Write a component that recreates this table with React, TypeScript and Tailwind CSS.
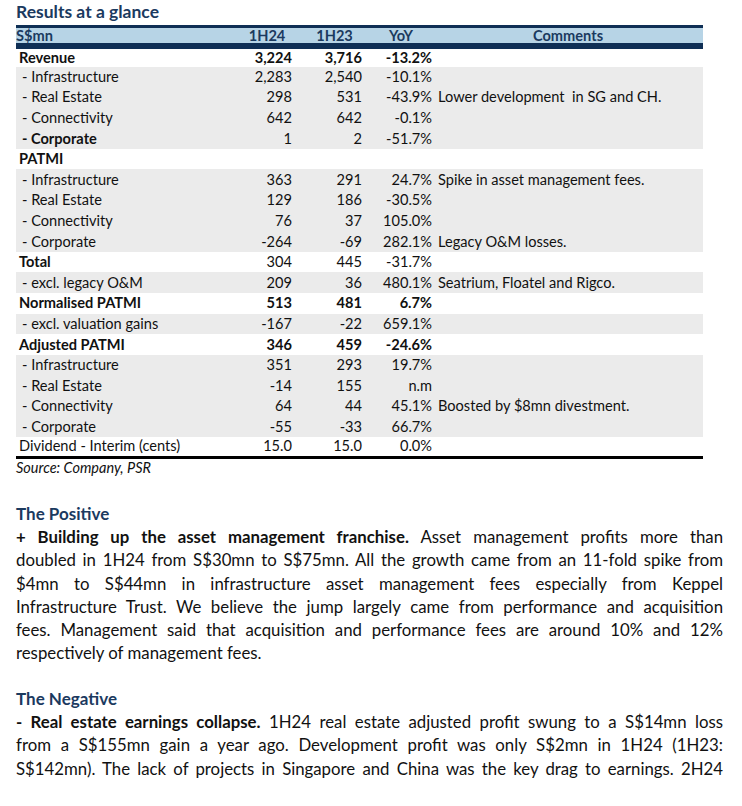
import React from "react";

type Row = {
  label: string;
  a: string;
  b: string;
  yoy: string;
  note?: string;
  sub?: boolean;
  gray?: boolean;
  boldLabel?: boolean;
  boldNums?: boolean;
  h?: string;
};

const rows: Row[] = [
  { label: "Revenue", a: "3,224", b: "3,716", yoy: "-13.2%", boldLabel: true, boldNums: true, h: "h-[17.5px]" },
  { label: "- Infrastructure", a: "2,283", b: "2,540", yoy: "-10.1%", sub: true, gray: true },
  { label: "- Real Estate", a: "298", b: "531", yoy: "-43.9%", note: "Lower development  in SG and CH.", sub: true, gray: true },
  { label: "- Connectivity", a: "642", b: "642", yoy: "-0.1%", sub: true, gray: true },
  { label: "- Corporate", a: "1", b: "2", yoy: "-51.7%", sub: true, gray: true, boldLabel: true },
  { label: "PATMI", a: "", b: "", yoy: "", boldLabel: true },
  { label: "- Infrastructure", a: "363", b: "291", yoy: "24.7%", note: "Spike in asset management fees.", sub: true, gray: true },
  { label: "- Real Estate", a: "129", b: "186", yoy: "-30.5%", sub: true, gray: true },
  { label: "- Connectivity", a: "76", b: "37", yoy: "105.0%", sub: true, gray: true },
  { label: "- Corporate", a: "-264", b: "-69", yoy: "282.1%", note: "Legacy O&M losses.", sub: true, gray: true },
  { label: "Total", a: "304", b: "445", yoy: "-31.7%", boldLabel: true },
  { label: "- excl. legacy O&M", a: "209", b: "36", yoy: "480.1%", note: "Seatrium, Floatel and Rigco.", sub: true, gray: true },
  { label: "Normalised PATMI", a: "513", b: "481", yoy: "6.7%", boldLabel: true, boldNums: true },
  { label: "- excl. valuation gains", a: "-167", b: "-22", yoy: "659.1%", sub: true, gray: true },
  { label: "Adjusted PATMI", a: "346", b: "459", yoy: "-24.6%", boldLabel: true, boldNums: true },
  { label: "- Infrastructure", a: "351", b: "293", yoy: "19.7%", sub: true, gray: true },
  { label: "- Real Estate", a: "-14", b: "155", yoy: "n.m", sub: true, gray: true },
  { label: "- Connectivity", a: "64", b: "44", yoy: "45.1%", note: "Boosted by $8mn divestment.", sub: true, gray: true },
  { label: "- Corporate", a: "-55", b: "-33", yoy: "66.7%", sub: true, gray: true },
  { label: "Dividend - Interim (cents)", a: "15.0", b: "15.0", yoy: "0.0%", h: "h-[18.5px]" },
];

const cols = "grid grid-cols-[218px_66px_69px_64px_270px] items-center";

function TableRow({ r }: { r: Row }) {
  return (
    <div className={`${cols} ${r.h ?? "h-[20.6px]"} ${r.gray ? "bg-[#ebebeb]" : "bg-white"}`}>
      <div className={`${r.sub ? "pl-[6px]" : "pl-[3px]"} ${r.boldLabel ? "font-bold" : ""} whitespace-pre`}>{r.label}</div>
      <div className={`text-right pr-[8px] ${r.boldNums ? "font-bold" : ""}`}>{r.a}</div>
      <div className={`text-right pr-[7px] ${r.boldNums ? "font-bold" : ""}`}>{r.b}</div>
      <div className={`text-right pr-[1px] ${r.boldNums ? "font-bold" : ""}`}>{r.yoy}</div>
      <div className="pl-[5px] whitespace-pre">{r.note ?? ""}</div>
    </div>
  );
}

function Line({ children, last }: { children: React.ReactNode; last?: boolean }) {
  return (
    <div className={last ? "text-left" : "text-justify [text-align-last:justify]"}>{children}</div>
  );
}

export default function App() {
  return (
    <div className="w-[742px] h-[806px] overflow-hidden bg-white text-[#111] font-['Lato',sans-serif]">
      <div className="pl-4">
        <h2 className="h-[25px] pt-[2px] text-[17.5px] leading-[20px] font-bold text-[#1b3a5f]">Results at a glance</h2>

        <div className="w-[687px] text-[14.6px] leading-[16px]">
          <div className="h-[3px] bg-[#0f2f55]" />
          <div className={`${cols} h-[15px] bg-[#b7d4e6] font-bold text-[#1b3a5f]`}>
            <div>S$mn</div>
            <div className="text-center">1H24</div>
            <div className="text-center">1H23</div>
            <div className="text-center">YoY</div>
            <div className="text-center">Comments</div>
          </div>
          <div className="h-[6px] bg-[#0f2f55]" />
          {rows.map((r, i) => (
            <TableRow key={i} r={r} />
          ))}
          <div className="h-[3px] bg-black" />
        </div>

        <p className="text-[14.5px] leading-[18px] italic">Source: Company, PSR</p>
      </div>

      <div className="pl-4 pr-[19px] text-[16.8px] leading-[23.3px] mt-[25px]">
        <h3 className="font-bold text-[17px] text-[#1b3a5f]">The Positive</h3>
        <Line>
          <b>+ Building up the asset management franchise.</b> Asset management profits more than
        </Line>
        <Line>doubled in 1H24 from S$30mn to S$75mn. All the growth came from an 11-fold spike from</Line>
        <Line>$4mn to S$44mn in infrastructure asset management fees especially from Keppel</Line>
        <Line>Infrastructure Trust. We believe the jump largely came from performance and acquisition</Line>
        <Line>fees. Management said that acquisition and performance fees are around 10% and 12%</Line>
        <Line last>respectively of management fees.</Line>

        <h3 className="font-bold text-[17px] text-[#1b3a5f] mt-[22px]">The Negative</h3>
        <Line>
          <b>- Real estate earnings collapse.</b> 1H24 real estate adjusted profit swung to a S$14mn loss
        </Line>
        <Line>from a S$155mn gain a year ago. Development profit was only S$2mn in 1H24 (1H23:</Line>
        <Line>S$142mn). The lack of projects in Singapore and China was the key drag to earnings. 2H24</Line>
      </div>
    </div>
  );
}
